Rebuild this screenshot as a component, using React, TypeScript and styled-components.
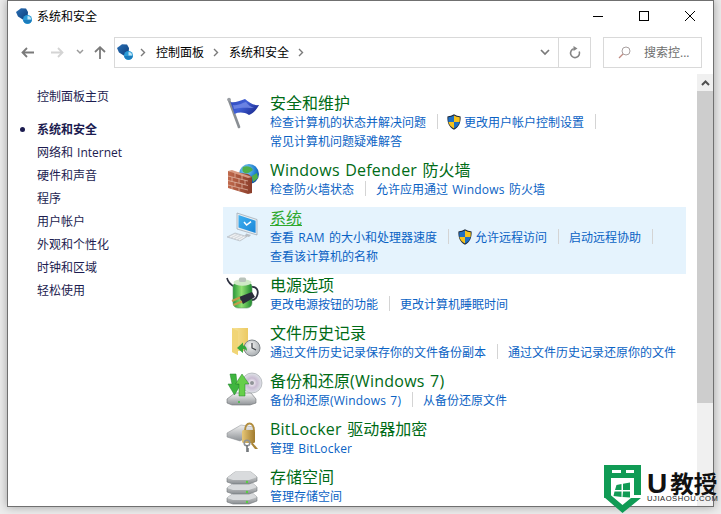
import React from "react";
import styled, { createGlobalStyle } from "styled-components";

const FONT = `"Open Sans", "Noto Sans CJK SC", sans-serif`;

const GlobalStyle = createGlobalStyle`
  html, body {
    margin: 0;
    padding: 0;
    width: 721px;
    height: 514px;
    overflow: hidden;
    background: #ececec;
    font-family: ${FONT};
    font-size: 12px;
  }
`;

// Icons

const PanelIcon = () => (
  <svg width="16" height="16" viewBox="0 0 16 16">
    <defs>
      <linearGradient id="pa" x1="0" y1="0" x2="1" y2="1">
        <stop offset="0" stopColor="#2a6fb5" />
        <stop offset="1" stopColor="#0c3f7c" />
      </linearGradient>
    </defs>
    <path d="M0 4 L5 0.2 L10 0.5 L12 4 L11.5 10 L7.5 12 L2 8.5 Z" fill="url(#pa)" />
    <circle cx="11.5" cy="11.5" r="4.5" fill="#2a9bd8" />
    <path d="M11.5 11.5 L11.5 8 A3.5 3.5 0 0 1 15 11.5 Z" fill="#bfe6f7" />
    <path d="M7.1 12 A4.5 4.5 0 0 0 15.9 12 Z" fill="#1c7cbc" />
  </svg>
);

const FlagIcon = () => (
  <svg width="40" height="40" viewBox="0 0 40 40">
    <defs>
      <linearGradient id="fl" x1="0" y1="0" x2="1" y2="0.6">
        <stop offset="0" stopColor="#2f47b8" />
        <stop offset="0.5" stopColor="#3f5fd6" />
        <stop offset="1" stopColor="#1f2f96" />
      </linearGradient>
    </defs>
    <path d="M5 6 L15 33" stroke="#8a8f94" strokeWidth="2.6" strokeLinecap="round" />
    <circle cx="5" cy="5.5" r="1.8" fill="#9a9ea3" />
    <path d="M6.5 8 C11 9 15 7 21 5 C25 8 29 12 35 11 C33 15 30 19 25 21 C20 18 15 18 10.5 20 Z" fill="url(#fl)" />
    <path d="M9 11 C14 12 18 9 22 8 C24 11 27 13 30 14 C25 14 18 13 10 15 Z" fill="#7d93ea" opacity="0.7" />
  </svg>
);

const WallIcon = () => (
  <svg width="40" height="40" viewBox="0 0 40 40">
    <defs>
      <radialGradient id="gl" cx="0.35" cy="0.3" r="0.8">
        <stop offset="0" stopColor="#8fd8f5" />
        <stop offset="0.6" stopColor="#1f7fd0" />
        <stop offset="1" stopColor="#0f3f94" />
      </radialGradient>
      <linearGradient id="br" x1="0" y1="0" x2="1" y2="0">
        <stop offset="0" stopColor="#c0694c" />
        <stop offset="1" stopColor="#8a3d2a" />
      </linearGradient>
    </defs>
    <circle cx="25" cy="13" r="10" fill="url(#gl)" />
    <path d="M19 6 C23 4 28 6 29 9 C26 11 24 13 21 12 C18 11 18 8 19 6 Z" fill="#4fb04a" />
    <path d="M28 15 L33 12 L34 17 L29 21 Z" fill="#4fb04a" />
    <path d="M4 10 L24 13 L28 16 L28 32 L24 33 L4 27 Z" fill="url(#br)" />
    <path d="M4 10 L8 9 L28 16 L24 17 Z" fill="#d89a82" />
    <g stroke="#e9c4b4" strokeWidth="0.8" fill="none" opacity="0.85">
      <path d="M4 15 L24 20 M4 19.5 L24 24.5 M4 24 L24 29" />
      <path d="M11 12 L11 16.5 M18 13.5 L18 18.5 M8 16 L8 20.5 M15 17.5 L15 22 M21 19 L21 24 M11 21 L11 25.5 M18 22.5 L18 27 M8 25 L8 28 M15 27 L15 30" />
    </g>
  </svg>
);

const MonitorIcon = () => (
  <svg width="40" height="40" viewBox="0 0 40 40">
    <defs>
      <linearGradient id="sc" x1="0" y1="0" x2="1" y2="1">
        <stop offset="0" stopColor="#3fb0f0" />
        <stop offset="1" stopColor="#1c86d8" />
      </linearGradient>
    </defs>
    <path d="M13 4 L33 10.5 L33 26 L13 20 Z" fill="#e8edf2" stroke="#8d98a3" strokeWidth="0.6" />
    <path d="M14.5 6 L31.6 11.7 L31.6 24 L14.5 18.4 Z" fill="url(#sc)" />
    <path d="M20 13 L22.6 16 L27 12.6" stroke="#fff" strokeWidth="1.5" fill="none" />
    <path d="M22 24.5 L27 26 L25 28 L21 27 Z" fill="#b8bec4" />
    <path d="M3 28 L11 24 L23 27.5 L16 32 Z" fill="#d7dbdf" stroke="#a6adb4" strokeWidth="0.5" />
    <path d="M6 28 L11.5 25.4 M9 29 L14.6 26.2 M12 30 L18 27 M15 31 L20.5 28" stroke="#fdfdfd" strokeWidth="0.8" />
  </svg>
);

const BatteryIcon = () => (
  <svg width="40" height="40" viewBox="0 0 40 40">
    <defs>
      <linearGradient id="ba" x1="0" y1="0" x2="1" y2="0">
        <stop offset="0" stopColor="#2a9a3a" />
        <stop offset="0.45" stopColor="#8fe070" />
        <stop offset="1" stopColor="#1f8a30" />
      </linearGradient>
    </defs>
    <path d="M3 2 C4 7 7 9 11 11" stroke="#2c3040" strokeWidth="1.6" fill="none" />
    <path d="M27 11 C33 10 35 15 33 20 C32 23 30 24 28 24" stroke="#2c3040" strokeWidth="1.8" fill="none" />
    <rect x="9" y="6" width="19" height="26" rx="5" fill="url(#ba)" stroke="#6a9a70" strokeWidth="0.6" />
    <ellipse cx="18.5" cy="6.5" rx="9" ry="3.2" fill="#cfe9c6" />
    <rect x="15" y="1.5" width="7" height="4.5" rx="1.5" fill="#b9c3bb" />
    <path d="M15 21 L28 16 L31 21 L19 28 Z" fill="#2a2d3a" />
    <path d="M8 25 L16 21.5 M9.5 29 L18 25.5" stroke="#c49a4a" strokeWidth="2.2" />
  </svg>
);

const FolderIcon = () => (
  <svg width="40" height="40" viewBox="0 0 40 40">
    <defs>
      <linearGradient id="fo" x1="0" y1="0" x2="1" y2="0">
        <stop offset="0" stopColor="#f7e39a" />
        <stop offset="1" stopColor="#ecca62" />
      </linearGradient>
      <radialGradient id="cl" cx="0.4" cy="0.35" r="0.8">
        <stop offset="0" stopColor="#f6f6f6" />
        <stop offset="1" stopColor="#9aa0a4" />
      </radialGradient>
    </defs>
    <path d="M8 4 L24 4 L24 27 L14 27 L14 31 L8 28 Z" fill="url(#fo)" />
    <path d="M8 4 L14 7 L14 31 L8 28 Z" fill="#f1d576" />
    <circle cx="28" cy="24" r="8" fill="url(#cl)" stroke="#7f8589" strokeWidth="1" />
    <path d="M28 19 L28 24 L32 26" stroke="#3c4044" strokeWidth="1.2" fill="none" />
    <path d="M13 24 L19 18.5 L19 21.5 C22 21.5 23 24 23 27 C21 25 20 25 19 25 L19 29 Z" fill="#35a83a" />
  </svg>
);

const BackupIcon = () => (
  <svg width="40" height="40" viewBox="0 0 40 40">
    <defs>
      <linearGradient id="dr" x1="0" y1="0" x2="0" y2="1">
        <stop offset="0" stopColor="#f4f4f4" />
        <stop offset="1" stopColor="#8f9397" />
      </linearGradient>
      <radialGradient id="di">
        <stop offset="0" stopColor="#ffffff" />
        <stop offset="0.5" stopColor="#c9bcd2" />
        <stop offset="1" stopColor="#dfe4e8" />
      </radialGradient>
    </defs>
    <path d="M3 27 L11 21 L27 21 L32 27 L32 31 L26 33 L8 33 L3 31 Z" fill="url(#dr)" stroke="#6e7276" strokeWidth="0.6" />
    <circle cx="28" cy="11" r="10" fill="url(#di)" stroke="#9a9ea2" strokeWidth="0.6" />
    <circle cx="28" cy="11" r="2" fill="#8f9397" />
    <circle cx="15" cy="30" r="1" fill="#3bc13b" />
    <path d="M6 2 L12 2 L13 12 L17 12 L10.5 23 L4 12 L8 12 Z" fill="#3fb53f" stroke="#1f7f2a" strokeWidth="0.5" />
    <path d="M21 24 L15 24 L15 12 L11.5 12 L18 2 L25 12 L21 12 Z" fill="#66cf4a" stroke="#1f7f2a" strokeWidth="0.5" />
  </svg>
);

const LockIcon = () => (
  <svg width="40" height="40" viewBox="0 0 40 40">
    <defs>
      <linearGradient id="dl" x1="0" y1="0" x2="0" y2="1">
        <stop offset="0" stopColor="#f1f1f1" />
        <stop offset="1" stopColor="#8e9296" />
      </linearGradient>
      <linearGradient id="lo" x1="0" y1="0" x2="1" y2="0">
        <stop offset="0" stopColor="#e7c777" />
        <stop offset="1" stopColor="#a07a2d" />
      </linearGradient>
    </defs>
    <path d="M3 13 L17 5 L30 7 L30 14 L16 21 L3 17 Z" fill="url(#dl)" stroke="#85898d" strokeWidth="0.5" />
    <path d="M21 11 C21 1 30 1 30 11" stroke="#b18d3e" strokeWidth="2" fill="none" />
    <rect x="18" y="10" width="13" height="13" rx="1.5" fill="url(#lo)" />
    <path d="M28 22 L34 29 L31 29 L27 24" fill="#a98435" />
    <circle cx="23" cy="23" r="2.8" fill="none" stroke="#8d9195" strokeWidth="1.6" />
    <path d="M23 25 L23 32 M23 29 L25 29 M23 31 L25 31" stroke="#6f7377" strokeWidth="1.6" />
  </svg>
);

const StackIcon = () => (
  <svg width="40" height="40" viewBox="0 0 40 40">
    <defs>
      <linearGradient id="sd" x1="0" y1="0" x2="0" y2="1">
        <stop offset="0" stopColor="#e9e9e9" />
        <stop offset="1" stopColor="#8b8f93" />
      </linearGradient>
    </defs>
    {[24, 14, 4].map((y) => (
      <g key={y}>
        <path
          d={`M3 ${y + 6} L11 ${y} L27 ${y} L33 ${y + 5} L33 ${y + 9} L25 ${y + 12} L9 ${y + 12} L3 ${y + 10} Z`}
          fill="url(#sd)"
          stroke="#74787c"
          strokeWidth="0.6"
        />
        <path d={`M3 ${y + 6} L11 ${y} L27 ${y} L33 ${y + 5} L25 ${y + 8} L9 ${y + 8} Z`} fill="#d9dbdd" />
        <circle cx="23" cy={y + 10} r="1.2" fill="#57d13f" />
      </g>
    ))}
  </svg>
);

const UacShield = () => (
  <svg width="14" height="16" viewBox="0 0 14 16">
    <path d="M7 0.3 C9 1.6 11 2.2 13.6 2.4 C13.9 8.5 12 13 7 15.7 C2 13 0.1 8.5 0.4 2.4 C3 2.2 5 1.6 7 0.3 Z" fill="#1f2a3a" />
    <path d="M7 1.4 L7 8 L1.4 8 C1.2 6.4 1.2 4.8 1.3 3.2 C3.4 3 5.3 2.4 7 1.4 Z" fill="#1f6fc4" />
    <path d="M7 1.4 C8.7 2.4 10.6 3 12.7 3.2 C12.8 4.8 12.8 6.4 12.6 8 L7 8 Z" fill="#f5c21c" />
    <path d="M1.4 8 L7 8 L7 14.6 C4 12.9 2 10.9 1.4 8 Z" fill="#f5c21c" />
    <path d="M7 8 L12.6 8 C12 10.9 10 12.9 7 14.6 Z" fill="#1f6fc4" />
  </svg>
);

const Crumb = () => (
  <svg width="6" height="9" viewBox="0 0 6 9">
    <path d="M1 1 L4.5 4.5 L1 8" stroke="#7a7a7a" strokeWidth="1.4" fill="none" />
  </svg>
);

// Window frame

const Page = styled.div`
  width: 721px;
  height: 514px;
  padding-left: 7px;
  box-sizing: border-box;
  position: relative;
  overflow: hidden;
`;

const Window = styled.div`
  width: 707px;
  height: 507px;
  box-sizing: border-box;
  border: 1px solid #707070;
  background: #fff;
  box-shadow: 0 0 9px rgba(0, 0, 0, 0.32);
  display: flex;
  flex-direction: column;
`;

const TitleBar = styled.div`
  height: 30px;
  flex: none;
  display: flex;
  align-items: center;
  padding-left: 8px;
  color: #000;
`;

const TitleText = styled.span`
  margin-left: 5px;
  flex: 1;
`;

const CaptionButton = styled.div`
  width: 46px;
  height: 30px;
  display: flex;
  align-items: center;
  justify-content: center;
`;

const NavBar = styled.div`
  height: 43px;
  flex: none;
  display: flex;
  align-items: center;
  padding-bottom: 1px;
  box-sizing: border-box;
`;

const NavButton = styled.div<{ $w: number }>`
  width: ${(p) => p.$w}px;
  height: 30px;
  display: flex;
  align-items: center;
  justify-content: center;
`;

const AddressBox = styled.div`
  margin-left: 6px;
  width: 477px;
  height: 31px;
  box-sizing: border-box;
  border: 1px solid #d9d9d9;
  display: flex;
  align-items: center;
  padding-left: 2px;
  color: #000;
`;

const CrumbText = styled.span`
  margin: 0 9px 0 10px;
`;

const CrumbArrow = styled.span`
  display: flex;
  margin-left: 7px;
`;

const Spacer = styled.div`
  flex: 1;
`;

const AddressChevron = styled.div`
  width: 27px;
  height: 100%;
  display: flex;
  align-items: center;
  justify-content: center;
`;

const AddressRefresh = styled.div`
  width: 31px;
  height: 100%;
  border-left: 1px solid #d9d9d9;
  display: flex;
  align-items: center;
  justify-content: center;
`;

const SearchBox = styled.div`
  margin-left: 12px;
  width: 99px;
  height: 31px;
  box-sizing: border-box;
  border: 1px solid #d9d9d9;
  display: flex;
  align-items: center;
  padding-left: 14px;
  color: #6d6d6d;
`;

const SearchText = styled.span`
  margin-left: 13px;
  white-space: nowrap;
`;

// Body

const Body = styled.div`
  flex: 1;
  min-height: 0;
  display: flex;
  overflow: hidden;
`;

const Sidebar = styled.nav`
  width: 215px;
  flex: none;
  box-sizing: border-box;
  padding: 11px 0 0 12px;
  word-spacing: 1px;
`;

const SideItem = styled.div<{ $current?: boolean; $gap?: boolean }>`
  height: 23px;
  line-height: 23px;
  display: flex;
  align-items: center;
  color: #1c1c50;
  font-weight: ${(p) => (p.$current ? 700 : 400)};
  margin-bottom: ${(p) => (p.$gap ? 10 : 0)}px;

  &::before {
    content: "";
    width: 5px;
    height: 5px;
    border-radius: 50%;
    margin-right: 12px;
    background: ${(p) => (p.$current ? "#1c1c50" : "transparent")};
  }
`;

const Main = styled.main`
  flex: 1;
  min-width: 0;
  padding: 18px 11px 0 0;
`;

const Section = styled.section<{ $hover?: boolean }>`
  display: flex;
  padding-left: 1px;
  background: ${(p) => (p.$hover ? "#e5f3fd" : "transparent")};
`;

const IconSlot = styled.div`
  width: 40px;
  height: 40px;
  margin: 2px 6px 0 0;
  flex: none;
`;

const SectionBody = styled.div`
  flex: 1;
  min-width: 0;
  padding-bottom: 9px;
`;

const SectionTitle = styled.div<{ $hover?: boolean }>`
  height: 20px;
  line-height: 23px;
  font-size: 16px;
  white-space: nowrap;
  color: ${(p) => (p.$hover ? "#2ea82e" : "#006b16")};
  text-decoration: ${(p) => (p.$hover ? "underline" : "none")};
`;

const LinkLine = styled.div`
  display: flex;
  height: 19px;
  align-items: center;
`;

const LinkItem = styled.span<{ $sep?: boolean }>`
  display: flex;
  align-items: center;
  height: 15px;
  white-space: pre;
  color: #0a62c4;
  ${(p) =>
    p.$sep &&
    `padding-right: 11px;
     margin-right: 10px;
     border-right: 1px solid #d4d4d4;`}
`;

const LinkText = styled.span`
  white-space: pre;
`;

const Latin = styled.span`
  letter-spacing: 0.015em;
  word-spacing: 1px;
`;

const ShieldSlot = styled.span`
  display: flex;
  margin: 0 3px 0 -1px;
`;

const ScrollTrack = styled.div`
  width: 16px;
  flex: none;
  background: #f0f0f0;
  display: flex;
  flex-direction: column;
`;

const ScrollArrow = styled.div`
  height: 17px;
  display: flex;
  align-items: center;
  justify-content: center;
`;

const ScrollThumb = styled.div`
  height: 312px;
  background: #cdcdcd;
`;

// Watermark sits over the window corner

const Watermark = styled.div`
  position: absolute;
  left: 604px;
  top: 465px;
  display: flex;
  gap: 6px;
`;

const MarkText = styled.div`
  display: flex;
  flex-direction: column;
  margin-top: 7px;
`;

const MarkTitle = styled.div`
  display: flex;
  align-items: center;
  height: 23px;
  font-family: "Noto Sans CJK SC", sans-serif;
  font-weight: 700;
  font-size: 23.5px;
  line-height: 23px;
  color: #111;
  white-space: nowrap;
`;

const MarkU = styled.span`
  font-family: "Liberation Sans", sans-serif;
  font-size: 28px;
  margin-right: 3px;
`;

const MarkSub = styled.div`
  font-family: "Liberation Sans", sans-serif;
  font-size: 7.6px;
  line-height: 8px;
  letter-spacing: 0.55px;
  color: #222;
  white-space: nowrap;
`;

// Latin runs sit a little wider than the CJK around them
const spaced = (text: string) =>
  text.split(/([A-Za-z0-9() ]+)/).map((part, i) =>
    i % 2 === 1 ? <Latin key={i}>{part}</Latin> : part
  );

type Link = { text: string; uac?: boolean; sep?: boolean };

type Item = {
  title: string;
  icon: React.ReactNode;
  lines: Link[][];
  hover?: boolean;
};

const items: Item[] = [
  {
    title: "安全和维护",
    icon: <FlagIcon />,
    lines: [
      [
        { text: "检查计算机的状态并解决问题", sep: true },
        { text: "更改用户帐户控制设置", uac: true, sep: true },
      ],
      [{ text: "常见计算机问题疑难解答" }],
    ],
  },
  {
    title: "Windows Defender 防火墙",
    icon: <WallIcon />,
    lines: [
      [
        { text: "检查防火墙状态", sep: true },
        { text: "允许应用通过 Windows 防火墙" },
      ],
    ],
  },
  {
    title: "系统",
    icon: <MonitorIcon />,
    hover: true,
    lines: [
      [
        { text: "查看 RAM 的大小和处理器速度", sep: true },
        { text: "允许远程访问", uac: true, sep: true },
        { text: "启动远程协助", sep: true },
      ],
      [{ text: "查看该计算机的名称" }],
    ],
  },
  {
    title: "电源选项",
    icon: <BatteryIcon />,
    lines: [
      [
        { text: "更改电源按钮的功能", sep: true },
        { text: "更改计算机睡眠时间" },
      ],
    ],
  },
  {
    title: "文件历史记录",
    icon: <FolderIcon />,
    lines: [
      [
        { text: "通过文件历史记录保存你的文件备份副本", sep: true },
        { text: "通过文件历史记录还原你的文件" },
      ],
    ],
  },
  {
    title: "备份和还原(Windows 7)",
    icon: <BackupIcon />,
    lines: [
      [
        { text: "备份和还原(Windows 7)", sep: true },
        { text: "从备份还原文件" },
      ],
    ],
  },
  {
    title: "BitLocker 驱动器加密",
    icon: <LockIcon />,
    lines: [[{ text: "管理 BitLocker" }]],
  },
  {
    title: "存储空间",
    icon: <StackIcon />,
    lines: [[{ text: "管理存储空间" }]],
  },
];

const sideItems = ["网络和 Internet", "硬件和声音", "程序", "用户帐户", "外观和个性化", "时钟和区域", "轻松使用"];

export default function App() {
  return (
    <Page>
      <GlobalStyle />
      <Window>
        <TitleBar>
          <PanelIcon />
          <TitleText>系统和安全</TitleText>
          <CaptionButton>
            <svg width="10" height="10" viewBox="0 0 10 10">
              <path d="M0 5.5 H10" stroke="#000" strokeWidth="1" />
            </svg>
          </CaptionButton>
          <CaptionButton>
            <svg width="10" height="10" viewBox="0 0 10 10">
              <rect x="0.5" y="0.5" width="9" height="9" fill="none" stroke="#000" strokeWidth="1" />
            </svg>
          </CaptionButton>
          <CaptionButton>
            <svg width="10" height="10" viewBox="0 0 10 10">
              <path d="M0 0 L10 10 M10 0 L0 10" stroke="#000" strokeWidth="1" />
            </svg>
          </CaptionButton>
        </TitleBar>

        <NavBar>
          <NavButton $w={38}>
            <svg width="13" height="11" viewBox="0 0 13 11">
              <path d="M6 1 L1.5 5.5 L6 10 M1.5 5.5 H13" stroke="#7a7a7a" strokeWidth="1.8" fill="none" />
            </svg>
          </NavButton>
          <NavButton $w={22}>
            <svg width="13" height="11" viewBox="0 0 13 11">
              <path d="M7 1 L11.5 5.5 L7 10 M11.5 5.5 H0" stroke="#d4d4d4" strokeWidth="1.8" fill="none" />
            </svg>
          </NavButton>
          <NavButton $w={24}>
            <svg width="8" height="6" viewBox="0 0 8 6">
              <path d="M1 1 L4 4 L7 1" stroke="#9a9a9a" strokeWidth="1.5" fill="none" />
            </svg>
          </NavButton>
          <NavButton $w={16}>
            <svg width="12" height="13" viewBox="0 0 12 13">
              <path d="M1 6 L6 1.2 L11 6 M6 1.2 V13" stroke="#7a7a7a" strokeWidth="1.8" fill="none" />
            </svg>
          </NavButton>
          <AddressBox>
            <PanelIcon />
            <CrumbArrow>
              <Crumb />
            </CrumbArrow>
            <CrumbText>控制面板</CrumbText>
            <Crumb />
            <CrumbText>系统和安全</CrumbText>
            <Crumb />
            <Spacer />
            <AddressChevron>
              <svg width="10" height="7" viewBox="0 0 10 7">
                <path d="M1 1 L5 5 L9 1" stroke="#7a7a7a" strokeWidth="1.7" fill="none" />
              </svg>
            </AddressChevron>
            <AddressRefresh>
              <svg width="12" height="13" viewBox="0 0 12 13">
                <path d="M6 2.5 A4.5 4.5 0 1 1 1.6 6.8" stroke="#858585" strokeWidth="1.6" fill="none" transform="rotate(70 6 7)" />
                <path d="M4.5 0 L8.5 2.5 L4.5 5 Z" fill="#858585" />
              </svg>
            </AddressRefresh>
          </AddressBox>
          <SearchBox>
            <svg width="13" height="13" viewBox="0 0 13 13">
              <circle cx="8" cy="5" r="4" fill="none" stroke="#a8a0a0" strokeWidth="1" />
              <path d="M5 8 L1 12" stroke="#c08a80" strokeWidth="1.2" />
            </svg>
            <SearchText>搜索控...</SearchText>
          </SearchBox>
        </NavBar>

        <Body>
          <Sidebar>
            <SideItem $gap>控制面板主页</SideItem>
            <SideItem $current>系统和安全</SideItem>
            {sideItems.map((s) => (
              <SideItem key={s}>{s}</SideItem>
            ))}
          </Sidebar>

          <Main>
            {items.map((item) => (
              <Section key={item.title} $hover={item.hover}>
                <IconSlot>{item.icon}</IconSlot>
                <SectionBody>
                  <SectionTitle $hover={item.hover}>{spaced(item.title)}</SectionTitle>
                  {item.lines.map((line, i) => (
                    <LinkLine key={i}>
                      {line.map((l) => (
                        <LinkItem key={l.text} $sep={l.sep}>
                          {l.uac && (
                            <ShieldSlot>
                              <UacShield />
                            </ShieldSlot>
                          )}
                          <LinkText>{spaced(l.text)}</LinkText>
                        </LinkItem>
                      ))}
                    </LinkLine>
                  ))}
                </SectionBody>
              </Section>
            ))}
          </Main>

          <ScrollTrack>
            <ScrollArrow>
              <svg width="9" height="6" viewBox="0 0 9 6">
                <path d="M1 5 L4.5 1.5 L8 5" stroke="#505050" strokeWidth="2" fill="none" />
              </svg>
            </ScrollArrow>
            <ScrollThumb />
          </ScrollTrack>
        </Body>
      </Window>

      <Watermark>
        <svg width="37" height="49" viewBox="0 0 37 49">
          <path d="M0 0 H37 V13 H0 Z" fill="#109b55" />
          <rect x="8" y="5" width="9" height="3" fill="#fff" />
          <rect x="22" y="5" width="8" height="3" fill="#fff" />
          <path d="M7 13 H30 V31 L18.5 41 L7 31 Z" fill="#fff" />
          <path d="M0 13 H7 V31 L0 33 Z" fill="#109b55" />
          <path d="M30 13 H37 V30 L30 30 Z" fill="#109b55" />
          <path d="M0 32 L6 29.5 L18.5 40 L27 33 L37 33 L18.5 48 Z" fill="#109b55" />
          <path d="M12.5 20 L17.5 19 V25 H11 Z M19 18.7 L26 17.5 V25 H19 Z M10.5 26.5 H17.5 V32 L9.5 31 Z M19 26.5 H26 V32.5 L18.5 32 Z" fill="#109b55" />
        </svg>
        <MarkText>
          <MarkTitle>
            <MarkU>U</MarkU>教授
          </MarkTitle>
          <MarkSub>UJIAOSHOU.COM</MarkSub>
        </MarkText>
      </Watermark>
    </Page>
  );
}
